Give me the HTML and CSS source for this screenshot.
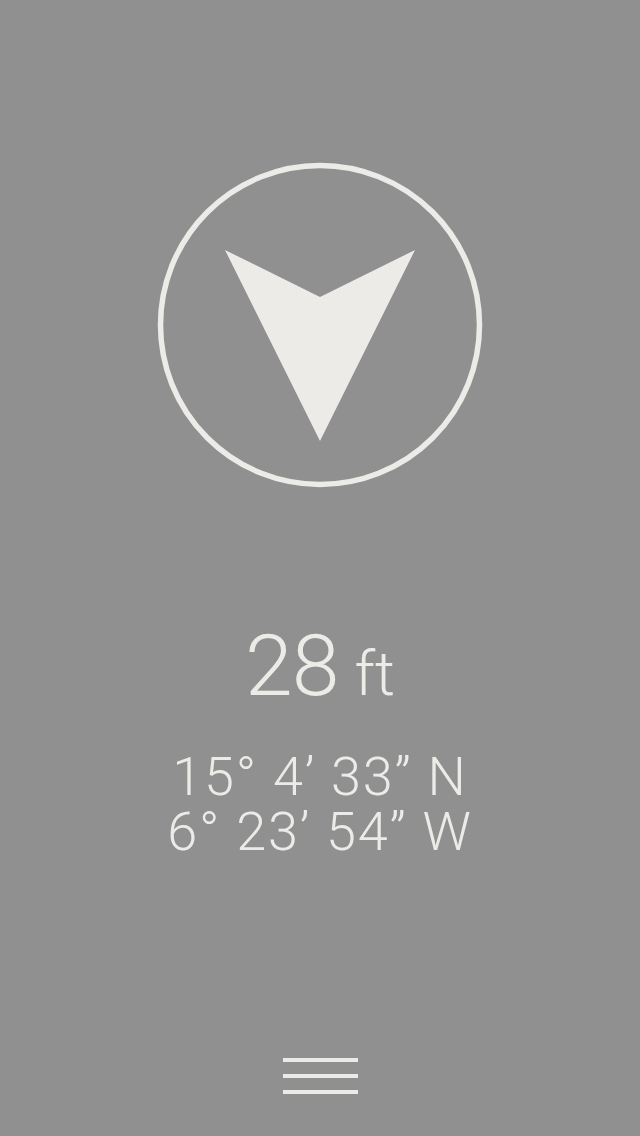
FILE: index.html
```html
<!DOCTYPE html>
<html lang="en">
<head>
  <meta charset="UTF-8">
  <title>Compass</title>
  <meta name="viewport" content="width=device-width, initial-scale=1.0">
  <link rel="stylesheet" href="styles.css">
</head>
<body>
  <div class="screen">
    <!-- Direction dial -->
    <svg class="dial" width="330" height="330" viewBox="0 0 330 330">
      <circle cx="165" cy="165" r="159.5" fill="none" stroke="#ecebe7" stroke-width="5.5"/>
      <polygon points="70,90 165,137 260,90 165,281" fill="#ecebe7"/>
    </svg>

    <div class="distance">
      <span class="value">28</span>
      <span class="unit">ft</span>
    </div>

    <div class="coords">
      <div>15° 4’ 33” N</div>
      <div>6° 23’ 54” W</div>
    </div>

    <div class="menu">
      <span></span>
      <span></span>
      <span></span>
    </div>
  </div>
</body>
</html>
```

FILE: styles.css
```css
body {
  margin: 0;
  background-color: #909090;
  color: #ecebe7;
  font-family: 'Roboto', 'Liberation Sans', sans-serif;
  font-weight: 300;
}

.screen {
  height: 1136px;
  display: flex;
  flex-direction: column;
  align-items: center;
}

.dial {
  margin-top: 160px;
  display: block;
}

.distance {
  margin-top: 133px;
  display: flex;
  align-items: baseline;
  gap: 16px;
  line-height: 1;
}

.value {
  font-size: 86px;
  letter-spacing: -1px;
}

.unit {
  font-size: 62px;
}

.coords {
  margin-top: 40px;
  text-align: center;
  font-size: 54px;
  line-height: 55px;
  letter-spacing: 1.8px;
}

.menu {
  margin-top: auto;
  margin-bottom: 42px;
  width: 75px;
  display: flex;
  flex-direction: column;
  gap: 12px;
}

.menu span {
  display: block;
  height: 4px;
  background: #ecebe7;
}
```
